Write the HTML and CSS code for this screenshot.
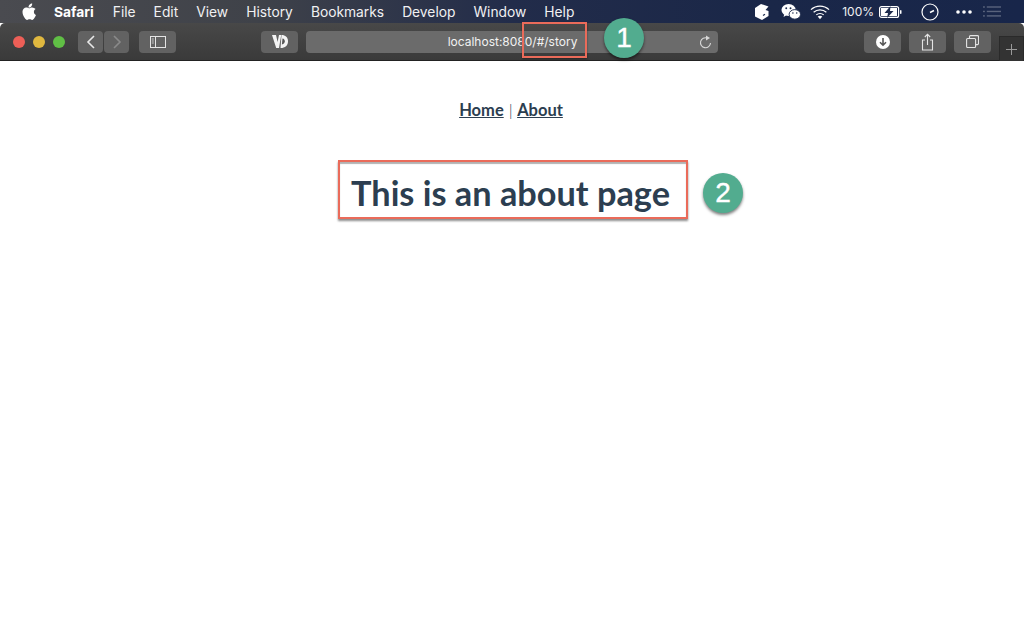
FILE: index.html
```html
<!DOCTYPE html>
<html>
<head>
  <title>About</title>
  <meta charset="utf-8">
  <link rel="stylesheet" href="styles.css">
</head>
<body>
  <div class="menubar">
    <div class="menu-left">
      <svg class="apple" width="16" height="18" viewBox="0 0 16 18"><path fill="#fff" d="M11.2 0.5c.1 1.2-.4 2.2-1 2.9-.7.8-1.7 1.3-2.7 1.2-.1-1.1.4-2.200 1-2.900.7-.7 1.800-1.200 2.700-1.200zM14.600 6.100c-1.100.7-1.700 1.700-1.700 2.900 0 1.400.8 2.500 2.100 3.100-.4 1.100-.9 2.100-1.600 3-.6.9-1.300 1.800-2.300 1.800s-1.300-.6-2.500-.6-1.600.6-2.500.6c-1 0-1.700-1-2.400-1.900C2.400 13.300 1.400 10.800 1.500 8.600c.1-2.300 1.800-4 3.800-4 1.100 0 2 .7 2.700.7s1.800-.8 3.100-.8c1.300.1 2.600.6 3.500 1.600z"/></svg>
      <span class="menu-app">Safari</span>
      <span>File</span>
      <span>Edit</span>
      <span>View</span>
      <span>History</span>
      <span>Bookmarks</span>
      <span>Develop</span>
      <span>Window</span>
      <span>Help</span>
    </div>
    <div class="menu-right">
      <svg class="icon-cube" width="15" height="18" viewBox="0 0 15 18"><path fill="#fff" d="M7 1l7.500 2.500-3 3.500 3 1v5L8 17l-7-3.500v-8.500z"/><path stroke="#1c2a4c" stroke-width="1.200" d="M9 12.500l2-1.300"/></svg>
      <svg class="icon-wechat" width="20" height="18" viewBox="0 0 21 18"><ellipse cx="8" cy="7" rx="7.500" ry="6.300" fill="#fff"/><path fill="#fff" d="M3.500 11l-.8 3.200 3.300-2z"/><ellipse cx="14.500" cy="11.500" rx="6" ry="5" fill="#fff" stroke="#1c2a4c"/><circle cx="5.500" cy="5" r="1" fill="#1c2a4c"/><circle cx="10" cy="5" r="1" fill="#1c2a4c"/><circle cx="12.500" cy="10" r=".8" fill="#1c2a4c"/><circle cx="16.500" cy="10" r=".8" fill="#1c2a4c"/></svg>
      <svg class="icon-wifi" width="20" height="16" viewBox="0 0 21 16" fill="none" stroke="#fff" stroke-width="1.300"><path d="M1 5.500c5.400-5 13.600-5 19 0"/><path d="M3.800 8.300c3.800-3.400 9.600-3.400 13.400 0"/><path d="M6.600 11c2.200-1.900 5.600-1.900 7.800 0"/><path fill="#fff" stroke="none" d="M10.500 15.500l-2.400-2.800c1.400-.9 3.400-.9 4.800 0z"/></svg>
      <span class="battery-text">100%</span>
      <svg class="icon-battery" width="23" height="12" viewBox="0 0 23 12"><rect x=".6" y=".6" width="19" height="10.800" rx="2" fill="none" stroke="#fff" stroke-width="1.200"/><rect x="2" y="2" width="16" height="8" fill="#fff"/><path fill="#1c2a4c" d="M11.500 0L5.500 7h3.500l-1 5 6.500-7H11z"/><rect x="21" y="4" width="1.500" height="4" rx=".7" fill="#fff"/></svg>
      <svg class="icon-clock" width="18" height="18" viewBox="0 0 18 18" fill="none" stroke="#fff" stroke-width="1.200"><circle cx="9" cy="9" r="8"/><path d="M9 9.500l4-2" stroke-width="1.500"/></svg>
      <svg class="icon-dots" width="16" height="4" viewBox="0 0 16 4"><circle cx="2" cy="2" r="1.800" fill="#fff"/><circle cx="8" cy="2" r="1.800" fill="#fff"/><circle cx="14" cy="2" r="1.800" fill="#fff"/></svg>
      <svg class="icon-list" width="18" height="11" viewBox="0 0 19 11" fill="#59637c"><rect y="0" width="2" height="1.500"/><rect x="4" y="0" width="15" height="1.500"/><rect y="4.700" width="2" height="1.500"/><rect x="4" y="4.700" width="15" height="1.500"/><rect y="9.400" width="2" height="1.500"/><rect x="4" y="9.400" width="15" height="1.500"/></svg>
    </div>
  </div>

  <div class="toolbar">
    <div class="lights">
      <i class="light red"></i>
      <i class="light yellow"></i>
      <i class="light green"></i>
    </div>
    <div class="nav-pair">
      <button class="tool narrow"><svg width="10" height="14" viewBox="0 0 10 14" fill="none" stroke="#e8e8e8" stroke-width="1.600"><path d="M8 1L2 7l6 6"/></svg></button>
      <button class="tool narrow"><svg width="10" height="14" viewBox="0 0 10 14" fill="none" stroke="#8a8a8a" stroke-width="1.600"><path d="M2 1l6 6-6 6"/></svg></button>
    </div>
    <button class="tool wide sidebar-btn"><svg width="16" height="12" viewBox="0 0 16 12" fill="none" stroke="#e4e4e4"><rect x=".5" y=".5" width="15" height="11"/><path d="M5.500 0v12"/><path d="M1.800 3h2M1.800 5h2M1.800 7h2" stroke-width=".8"/></svg></button>
    <button class="tool wide vd-btn"><svg width="16" height="15" viewBox="0 0 16 15" fill="#f4f4f4"><path d="M0 1h4l1.600 7L7 1h2.200L7 14H4.200z"/><path d="M9.500 1c4 0 6.500 2.400 6.500 6.200 0 4-2.800 6.800-7.500 6.800z"/><path fill="#555" d="M10.500 4.500c1.500.3 2.300 1.400 2.300 2.800 0 1.600-.9 2.800-2.900 3.200z"/></svg></button>
    <div class="addressbar">
      <span class="url">localhost:8080/#/story</span>
      <svg class="reload" width="13" height="14" viewBox="0 0 13 14" fill="none" stroke="#d8d8d8" stroke-width="1.100"><path d="M8.200 3A5 5 0 1 0 11.500 8"/><path fill="#d8d8d8" stroke="none" d="M7 .5l4 2.500-4 2.500z"/></svg>
    </div>
    <div class="tools-right">
      <button class="tool wide"><svg width="14" height="14" viewBox="0 0 14 14"><circle cx="7" cy="7" r="7" fill="#fff"/><path fill="none" stroke="#555" stroke-width="1.600" d="M7 3v7M4 7.200L7 10.200l3-3"/></svg></button>
      <button class="tool wide"><svg width="13" height="18" viewBox="0 0 13 18" fill="none" stroke="#e4e4e4" stroke-width="1.100"><path d="M4 7H1.500v10h10V7H9"/><path d="M6.500 12V1.500M3.800 4l2.700-2.700L9.200 4"/></svg></button>
      <button class="tool wide"><svg width="13" height="13" viewBox="0 0 13 13" fill="none" stroke="#e4e4e4" stroke-width="1.100"><rect x=".6" y="3.500" width="9" height="9" rx="1"/><path d="M3.500 3.500V1.600a1 1 0 0 1 1-1h7a1 1 0 0 1 1 1v7a1 1 0 0 1-1 1H9.600"/></svg></button>
    </div>
    <div class="new-tab"><svg width="11" height="11" viewBox="0 0 11 11" stroke="#9a9a9a"><path d="M5.500 0v11M0 5.500h11"/></svg></div>
  </div>

  <div class="page">
    <nav class="links"><a href="#/">Home</a> <span class="sep">|</span> <a href="#/about">About</a></nav>
    <h1 class="title">This is an about page</h1>
  </div>

  <div class="mark-box mark-url"></div>
  <div class="badge badge-1">1</div>
  <div class="badge badge-2">2</div>
</body>
</html>
```

FILE: styles.css
```css
html, body { margin: 0; padding: 0; height: 100%; background: #fff; overflow: hidden; }
body { position: relative; font-family: "Lato", sans-serif; }

.menubar {
  height: 23px;
  display: flex;
  justify-content: space-between;
  align-items: center;
  padding: 0 23px 0 21px;
  background: linear-gradient(90deg, #4a4b50 0%, #3f4249 25%, #222c4a 50%, #1a2748 75%, #18264a 100%);
  color: #f0f0f2;
  font: 13.800px "Inter", sans-serif;
}
.menu-left, .menu-right { display: flex; align-items: center; }
.menu-left { gap: 18px; }
.menu-left .apple { margin-right: -1px; }
.menu-app { font-weight: 700; color: #fff; margin-right: 1px; }
.battery-text { font-size: 12px; margin-left: 12px; }
.icon-wechat { margin-left: 12px; }
.icon-wifi { margin-left: 9px; }
.icon-battery { margin-left: 5px; }
.icon-clock { margin-left: 19px; }
.icon-dots { margin-left: 17px; }
.icon-list { margin-left: 11px; }

.toolbar {
  height: 38px;
  display: flex;
  align-items: center;
  padding: 0 33px 0 13px;
  background: linear-gradient(#484848, #3a3a3a);
  border-top-left-radius: 5px;
  border-top-right-radius: 5px;
  border-bottom: 1px solid #222;
  box-sizing: border-box;
  position: relative;
}
.lights { display: flex; gap: 8px; margin-right: 13px; }
.light { width: 12px; height: 12px; border-radius: 50%; display: block; }
.light.red { background: #ed5f57; }
.light.yellow { background: #e0b83f; }
.light.green { background: #60bf45; }

.tool {
  height: 22px;
  border: none;
  padding: 0;
  border-radius: 4px;
  background: #626262;
  display: flex;
  align-items: center;
  justify-content: center;
}
.tool.narrow { width: 25px; }
.tool.wide { width: 37px; }
.nav-pair { display: flex; gap: 1px; margin-right: 10px; }
.sidebar-btn { margin-right: 85px; }
.vd-btn { margin-right: 8px; }

.addressbar {
  width: 412px;
  height: 22px;
  border-radius: 4px;
  background: #6b6b6b;
  display: flex;
  align-items: center;
  justify-content: center;
  position: relative;
  color: #f2f2f2;
  font: 12px "Inter", sans-serif;
}
.url { margin-left: 1px; }
.reload { position: absolute; right: 6px; top: 4px; }

.tools-right { display: flex; gap: 8px; margin-left: auto; }
.new-tab {
  position: absolute;
  right: 0;
  bottom: -1px;
  width: 25px;
  height: 25px;
  border: 1px solid #2a2a2a;
  border-bottom: none;
  box-sizing: border-box;
  background: #333;
  display: flex;
  align-items: center;
  justify-content: center;
}

.page { display: flex; flex-direction: column; align-items: center; color: #2c3e50; }
.links { margin: 39px 2px 0 0; font-size: 16.500px; font-weight: 700; line-height: 20px; word-spacing: 1px; }
.links a { color: #2c3e50; text-decoration: underline; }
.sep { font-weight: 300; }
.title {
  margin: 40px 0 0 2px;
  padding: 7px 16px 1px 11px;
  font-size: 34.300px;
  line-height: 47px;
  font-weight: 700;
  border: 2px solid #ea6b5a;
  box-shadow: 0 2px 2px rgba(0, 0, 0, 0.45), inset 0 2px 1px rgba(0, 0, 0, 0.3);
}

/* annotation overlays */
.mark-box {
  position: absolute;
  box-sizing: border-box;
  border: 2px solid #ea6b5a;
  box-shadow: 0 1px 2px rgba(0, 0, 0, 0.4);
}
.mark-url { left: 522px; top: 22px; width: 65px; height: 36px; }
.badge {
  position: absolute;
  width: 40px;
  height: 40px;
  border-radius: 50%;
  background: #52ac8f;
  color: #fff;
  font: 28px/40px "Liberation Sans", sans-serif;
  -webkit-text-stroke: 0.4px #fff;
  text-align: center;
  box-shadow: 0 2px 3px rgba(0, 0, 0, 0.5);
}
.badge-1 { left: 604px; top: 18px; }
.badge-2 { left: 703px; top: 173px; }
```
